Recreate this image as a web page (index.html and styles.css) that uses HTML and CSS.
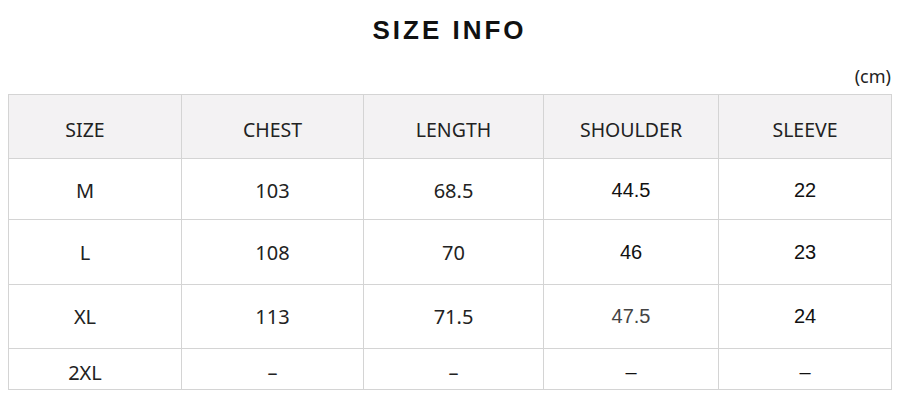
FILE: index.html
```html
<!DOCTYPE html>
<html lang="en">
<head>
<meta charset="utf-8">
<title>Size Info</title>
<link rel="stylesheet" href="styles.css">
</head>
<body>
<div class="page">
  <h1 class="title">SIZE INFO</h1>
  <div class="unit">(cm)</div>
  <table class="size-table">
    <colgroup>
      <col class="c1"><col class="c2"><col class="c3"><col class="c4"><col class="c5">
    </colgroup>
    <thead>
      <tr class="head-row">
        <th class="first">SIZE</th><th>CHEST</th><th>LENGTH</th><th>SHOULDER</th><th>SLEEVE</th>
      </tr>
    </thead>
    <tbody>
      <tr class="r1">
        <td class="first">M</td><td>103</td><td>68.5</td><td class="alt">44.5</td><td class="alt">22</td>
      </tr>
      <tr class="r2">
        <td class="first">L</td><td>108</td><td>70</td><td class="alt">46</td><td class="alt">23</td>
      </tr>
      <tr class="r3">
        <td class="first">XL</td><td>113</td><td>71.5</td><td class="alt light">47.5</td><td class="alt">24</td>
      </tr>
      <tr class="r4">
        <td class="first">2XL</td><td>–</td><td>–</td><td class="alt">–</td><td class="alt">–</td>
      </tr>
    </tbody>
  </table>
</div>
</body>
</html>
```

FILE: styles.css
```css
html, body {
  margin: 0;
  padding: 0;
  background: #ffffff;
}

.page {
  width: 900px;
  height: 403px;
  padding: 0 9px 0 8px;
  box-sizing: border-box;
  font-family: "Noto Sans", "Open Sans", sans-serif;
  color: #222222;
}

.title {
  margin: 0;
  padding-top: 13px;
  height: 45px;
  box-sizing: border-box;
  text-align: center;
  font-family: "Liberation Sans", Arial, sans-serif;
  font-weight: bold;
  font-size: 26px;
  line-height: 34px;
  letter-spacing: 3px;
  color: #111111;
}

.unit {
  text-align: right;
  font-size: 18px;
  line-height: 24px;
  height: 49px;
  padding-top: 19px;
  box-sizing: border-box;
  color: #222222;
}

.size-table {
  width: 883px;
  border-collapse: collapse;
  table-layout: fixed;
  border: 1px solid #d4d4d4;
}

.c1 { width: 173px; }
.c2 { width: 182px; }
.c3 { width: 180px; }
.c4 { width: 175px; }
.c5 { width: 173px; }

.size-table th,
.size-table td {
  border: 1px solid #d4d4d4;
  text-align: center;
  vertical-align: middle;
  padding: 0;
  font-size: 20px;
  font-weight: normal;
  box-sizing: border-box;
}

.size-table .first {
  padding-right: 20px;
}

.head-row th {
  background: #f3f2f3;
  height: 64px;
  font-size: 19.5px;
  padding-top: 6px;
}

.r1 td { height: 61px; padding-top: 2px; }
.r2 td { height: 65px; }
.r3 td { height: 64px; }
.r4 td { height: 41px; padding-top: 6px; }

.size-table td.alt {
  font-family: "Liberation Sans", Arial, sans-serif;
  font-size: 20px;
  color: #111111;
}

.size-table td.light {
  color: #444444;
}
```
